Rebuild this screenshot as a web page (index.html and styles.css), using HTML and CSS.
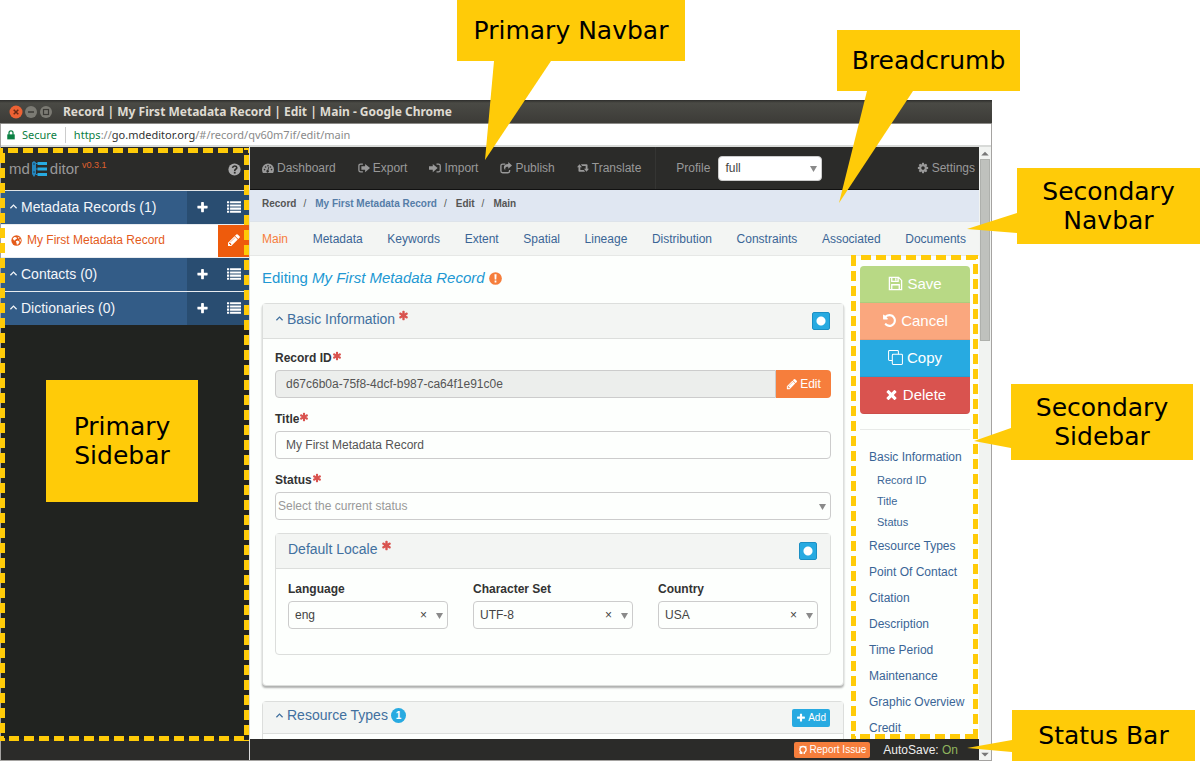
FILE: index.html
```html
<!DOCTYPE html>
<html lang="en">
<head>
<meta charset="utf-8">
<title>mdEditor layout guide</title>
<link rel="stylesheet" href="styles.css">
</head>
<body>
<svg class="sprite" aria-hidden="true">
  <symbol id="plus" viewBox="0 0 1792 1792"><path d="M1600 736v192q0 40-28 68t-68 28h-416v416q0 40-28 68t-68 28h-192q-40 0-68-28t-28-68v-416h-416q-40 0-68-28t-28-68v-192q0-40 28-68t68-28h416v-416q0-40 28-68t68-28h192q40 0 68 28t28 68v416h416q40 0 68 28t28 68z"/></symbol>
  <symbol id="list" viewBox="0 0 16 16"><path d="M0 1.500h2.500v2.300H0zM3.500 1.500H16v2.300H3.500zM0 5.100h2.500v2.300H0zM3.500 5.100H16v2.300H3.500zM0 8.700h2.500V11H0zM3.500 8.700H16V11H3.500zM0 12.300h2.500v2.300H0zM3.500 12.300H16v2.300H3.500z"/></symbol>
  <symbol id="pencil" viewBox="0 0 1792 1792"><path d="M491 1536l91-91-235-235-91 91v107h128v128h107zm523-928q0-22-22-22-10 0-17 7l-542 542q-7 7-7 17 0 22 22 22 10 0 17-7l542-542q7-7 7-17zm-54-192l416 416-832 832h-416v-416zm683 96q0 53-37 90l-166 166-416-416 166-165q36-38 90-38 53 0 91 38l235 234q37 39 37 91z"/></symbol>
  <symbol id="asterisk" viewBox="0 0 1792 1792"><path d="M1546 1050q46 26 59.500 77.500t-12.500 97.500l-64 110q-26 46-77.500 59.500t-97.500-12.500l-266-153v307q0 52-38 90t-90 38h-128q-52 0-90-38t-38-90v-307l-266 153q-46 26-97.500 12.500t-77.500-59.500l-64-110q-26-46-12.500-97.500t59.500-77.500l266-154-266-154q-46-26-59.500-77.500t12.500-97.500l64-110q26-46 77.500-59.500t97.500 12.500l266 153v-307q0-52 38-90t90-38h128q52 0 90 38t38 90v307l266-153q46-26 97.500-12.500t77.500 59.500l64 110q26 46 12.500 97.500t-59.500 77.500l-266 154z"/></symbol>
  <symbol id="undo" viewBox="0 0 1792 1792"><path d="M1664 896q0 156-61 298t-164 245-245 164-298 61q-172 0-327-72.500t-264-204.500q-7-10-6.500-22.500t8.500-20.500l137-138q10-9 25-9 16 2 23 12 73 95 179 147t225 52q104 0 198.500-40.500t163.500-109.500 109.500-163.500 40.500-198.500-40.500-198.500-109.500-163.500-163.500-109.500-198.500-40.500q-98 0-188 35.500t-160 101.500l137 138q31 30 14 69-17 40-59 40h-448q-26 0-45-19t-19-45v-448q0-42 40-59 39-17 69 14l130 129q107-101 244.500-156.500t284.500-55.500q156 0 298 61t245 164 164 245 61 298z"/></symbol>
  <symbol id="times" viewBox="0 0 1792 1792"><path d="M1490 1322q0 40-28 68l-136 136q-28 28-68 28t-68-28l-294-294-294 294q-28 28-68 28t-68-28l-136-136q-28-28-28-68t28-68l294-294-294-294q-28-28-28-68t28-68l136-136q28-28 68-28t68 28l294 294 294-294q28-28 68-28t68 28l136 136q28 28 28 68t-28 68l-294 294 294 294q28 28 28 68z"/></symbol>
  <symbol id="cog" viewBox="0 0 1792 1792"><path d="M1152 896q0-106-75-181t-181-75-181 75-75 181 75 181 181 75 181-75 75-181zm512-109v222q0 12-8 23t-20 13l-185 28q-19 54-39 91 35 50 107 138 10 12 10 25t-9 23q-27 37-99 108t-94 71q-12 0-26-9l-138-108q-44 23-91 38-16 136-29 186-7 28-36 28h-222q-14 0-24.500-8.500t-11.500-21.500l-28-184q-49-16-90-37l-141 107q-10 9-25 9-14 0-25-11-126-114-165-168-7-10-7-23 0-12 8-23 15-21 51-66.500t54-70.500q-27-50-41-99l-183-27q-13-2-21-12.500t-8-23.500v-222q0-12 8-23t19-13l186-28q14-46 39-92-40-57-107-138-10-12-10-24 0-10 9-23 26-36 98.500-107.500t94.500-71.500q13 0 26 10l138 107q44-23 91-38 16-136 29-186 7-28 36-28h222q14 0 24.500 8.500t11.500 21.500l28 184q49 16 90 37l142-107q9-9 24-9 13 0 25 10 129 119 165 170 7 8 7 22 0 12-8 23-15 21-51 66.500t-54 70.500q26 50 41 98l183 28q13 2 21 12.500t8 23.500z"/></symbol>
  <symbol id="up" viewBox="0 0 16 16"><path d="M2.500 11 8 5.500l5.500 5.500" fill="none" stroke="currentColor" stroke-width="2.200"/></symbol>
  <symbol id="dash" viewBox="0 0 16 16"><path fill-rule="evenodd" d="M8 2a8 8 0 0 1 8 8q0 2.500-1.200 4.500H1.200Q0 12.500 0 10a8 8 0 0 1 8-8zM3.400 9a1.100 1.100 0 1 0 0 2.200 1.100 1.100 0 0 0 0-2.200zM4.800 5.600a1.100 1.100 0 1 0 0 2.200 1.100 1.100 0 0 0 0-2.200zM8 4a1.100 1.100 0 1 0 0 2.200A1.100 1.100 0 0 0 8 4zm3.300 1.600a1.100 1.100 0 1 0 0 2.200 1.100 1.100 0 0 0 0-2.200zM12.700 9a1.100 1.100 0 1 0 0 2.200 1.100 1.100 0 0 0 0-2.200zM8.500 6.800 7.300 10.600a1.700 1.700 0 1 0 1.200.3l1-3.800z"/></symbol>
  <symbol id="export" viewBox="0 0 16 16"><path d="M6.500 2.800H3.600Q1.200 2.800 1.200 5v6q0 2.200 2.400 2.200h2.900" fill="none" stroke="currentColor" stroke-width="1.700"/><path d="M4.500 5.800h5V2.500L16 8l-6.500 5.500v-3.300h-5z"/></symbol>
  <symbol id="import" viewBox="0 0 16 16"><path d="M10 2.800h2.600Q15 2.800 15 5v6q0 2.200-2.400 2.200H10" fill="none" stroke="currentColor" stroke-width="1.700"/><path d="M0 5.800h5V2.500L11.500 8 5 13.500v-3.300H0z"/></symbol>
  <symbol id="share" viewBox="0 0 16 16"><path d="M7 2.800H3.500q-2.300 0-2.300 2.200v7q0 2.300 2.300 2.300h7q2.300 0 2.300-2.300v-1.500" fill="none" stroke="currentColor" stroke-width="1.800"/><path d="M11 0l5 4.500-5 4.500V6.500C8 6.400 6.500 7.200 7 11 3.500 7.500 5 2.600 11 2.500z"/></symbol>
  <symbol id="retweet" viewBox="0 0 18 16"><path d="M3.700 2.500 7.500 7H5v4h5.200l2 2.500H3.500q-1.300 0-1.300-1.300V7H0zM5.800 2.500h8.700q1.300 0 1.300 1.300V9H18l-3.700 4.500L10.500 9H13V5H7.800z"/></symbol>
  <symbol id="help" viewBox="0 0 16 16"><circle cx="8" cy="8" r="7.500"/><path d="M5.600 6Q6 3.700 8.200 3.700c3.300 0 3.200 3.100 1.200 4Q8.300 8.300 8.300 9.700" fill="none" stroke="#2b2b29" stroke-width="2"/><path d="M7.200 10.800h2.200V13H7.200z" fill="#2b2b29"/></symbol>
  <symbol id="globe" viewBox="0 0 16 16"><circle cx="8" cy="8" r="7.500"/><path fill="#fff" d="M2.500 5 5 3l2.500.4L9 5 7 6 5.500 8 4 7.500zM9.500 2.500l3 1.500-1.500 1.500zM7 9l3-1 2.500 2-2 3.500L8.500 14 8 11.500zM12 6.500l2-.5.4 3-1.400.3z"/></symbol>
  <symbol id="alert" viewBox="0 0 16 16"><circle cx="8" cy="8" r="7.800"/><path fill="#fff" d="M6.700 2.900h2.600L9 9.300H7zM6.900 10.500h2.200v2.300H6.900z"/></symbol>
  <symbol id="save" viewBox="0 0 16 16"><path d="M1.500 1.500h9.800l3.200 3.200v9.800h-13zM4 1.500v4.300h6.800V1.500M8.300 2.300v2.500M4 14.500V9.300h8v5.200" fill="none" stroke="currentColor" stroke-width="1.400"/></symbol>
  <symbol id="clone" viewBox="0 0 16 16"><rect x=".6" y=".6" width="10.500" height="10.500" rx="1" fill="none" stroke="currentColor" stroke-width="1.100"/><rect x="4.600" y="4.600" width="10.800" height="10.800" rx="1" fill="#27aae1" stroke="currentColor" stroke-width="1.100"/></symbol>
  <symbol id="lock" viewBox="0 0 16 16"><path d="M2 7h12v8H2z"/><path d="M4.800 8V4.500a3.200 3.200 0 0 1 6.400 0V8" fill="none" stroke="currentColor" stroke-width="2"/></symbol>
  <symbol id="github" viewBox="0 0 16 16"><path d="M6 14.500v-2.600a5 5 0 1 1 4 0v2.600M6 13.200q-2.200.5-3.500-1.500" fill="none" stroke="currentColor" stroke-width="2.200"/><path d="M2.500 1.500 6 2.800 3 6zM13.500 1.500 10 2.800 13 6z"/></symbol>
  <symbol id="down" viewBox="0 0 8 8"><path d="M0 1h8L4 8z"/></symbol>
</svg>

<div class="stage">
  <section class="window">
    <header class="titlebar">
      <svg class="winbtns" viewBox="0 0 46 14">
        <circle cx="8" cy="7" r="6.500" fill="#ee6234"/><path d="M5.700 4.700l4.600 4.600m0-4.600L5.700 9.300" stroke="#6b2a14" stroke-width="1.500"/>
        <circle cx="23" cy="7" r="6" fill="#7c7b74"/><path d="M20 7h6" stroke="#3c3b37" stroke-width="1.500"/>
        <circle cx="38" cy="7" r="6" fill="#7c7b74"/><rect x="35.500" y="4.500" width="5" height="5" fill="none" stroke="#3c3b37" stroke-width="1.200"/>
      </svg>
      <span>Record | My First Metadata Record | Edit | Main - Google Chrome</span>
    </header>
    <div class="address">
      <svg class="icon lock"><use href="#lock"/></svg>
      <span class="secure">Secure</span>
      <span class="url"><span class="secure">https</span>://<b>go.mdeditor.org</b>/#/record/qv60m7if/edit/main</span>
    </div>
    <div class="app">
      <aside class="sidebar">
        <div class="brand">
          <span>md</span>
          <svg class="logo" viewBox="0 0 16 16"><path d="M0 1.500 2 0l2 1.500V13l-2 3-2-3z" fill="#2487bf"/><path d="M1 3h2M1 11h2" stroke="#1b3f58"/><path d="M5.500 2.500H15M5.500 8H15M5.500 13.500H15" stroke="#27aae1" stroke-width="3"/><path d="M4 2.500h2M4 8h2M4 13.500h2" stroke="#2487bf"/></svg>
          <span>ditor</span><span class="version">v0.3.1</span>
          <a class="help" href="#help" aria-label="Help"><svg class="icon"><use href="#help"/></svg></a>
        </div>
        <ul class="groups">
          <li class="group"><a href="#records"><svg class="icon up"><use href="#up"/></svg>Metadata Records (1)</a><button aria-label="Add record"><svg class="icon"><use href="#plus"/></svg></button><button aria-label="List records"><svg class="icon"><use href="#list"/></svg></button></li>
          <li class="record"><a href="#record"><svg class="icon"><use href="#globe"/></svg>My First Metadata Record</a><button aria-label="Edit record"><svg class="icon"><use href="#pencil"/></svg></button></li>
          <li class="group"><a href="#contacts"><svg class="icon up"><use href="#up"/></svg>Contacts (0)</a><button aria-label="Add contact"><svg class="icon"><use href="#plus"/></svg></button><button aria-label="List contacts"><svg class="icon"><use href="#list"/></svg></button></li>
          <li class="group"><a href="#dictionaries"><svg class="icon up"><use href="#up"/></svg>Dictionaries (0)</a><button aria-label="Add dictionary"><svg class="icon"><use href="#plus"/></svg></button><button aria-label="List dictionaries"><svg class="icon"><use href="#list"/></svg></button></li>
        </ul>
        <div class="sidefoot"></div>
      </aside>

      <main class="main">
        <nav class="navbar">
          <a href="#dashboard"><svg class="icon"><use href="#dash"/></svg>Dashboard</a>
          <a href="#export"><svg class="icon"><use href="#export"/></svg>Export</a>
          <a href="#import"><svg class="icon"><use href="#import"/></svg>Import</a>
          <a href="#publish"><svg class="icon"><use href="#share"/></svg>Publish</a>
          <a href="#translate"><svg class="icon"><use href="#retweet"/></svg>Translate</a>
          <div class="profile">
            <label for="profile">Profile</label>
            <div class="picker"><select id="profile"><option>full</option></select><svg class="arrow"><use href="#down"/></svg></div>
          </div>
          <a class="settings" href="#settings"><svg class="icon"><use href="#cog"/></svg>Settings</a>
        </nav>
        <nav class="crumbs" aria-label="Breadcrumb">
          <span>Record</span><i>/</i><a href="#record">My First Metadata Record</a><i>/</i><span>Edit</span><i>/</i><span>Main</span>
        </nav>
        <nav class="tabs">
          <a class="active" href="#main">Main</a><a href="#metadata">Metadata</a><a href="#keywords">Keywords</a><a href="#extent">Extent</a><a href="#spatial">Spatial</a><a href="#lineage">Lineage</a><a href="#distribution">Distribution</a><a href="#constraints">Constraints</a><a href="#associated">Associated</a><a href="#documents">Documents</a>
        </nav>
        <div class="content">
          <div class="form">
            <h1>Editing <em>My First Metadata Record</em> <svg class="icon alert"><use href="#alert"/></svg></h1>
            <section class="panel raised">
              <div class="panelhead"><h2><svg class="icon up"><use href="#up"/></svg>Basic Information <svg class="icon req"><use href="#asterisk"/></svg></h2><button class="toggle" aria-label="Toggle required"></button></div>
              <div class="panelbody">
                <div class="field">
                  <label for="rid">Record ID<svg class="icon req"><use href="#asterisk"/></svg></label>
                  <div class="inputgroup"><input id="rid" type="text" value="d67c6b0a-75f8-4dcf-b987-ca64f1e91c0e" readonly><button class="edit"><svg class="icon"><use href="#pencil"/></svg>Edit</button></div>
                </div>
                <div class="field">
                  <label for="title">Title<svg class="icon req"><use href="#asterisk"/></svg></label>
                  <input id="title" type="text" value="My First Metadata Record">
                </div>
                <div class="field">
                  <label for="status">Status<svg class="icon req"><use href="#asterisk"/></svg></label>
                  <div class="picker status"><select id="status"><option>Select the current status</option></select><svg class="arrow"><use href="#down"/></svg></div>
                </div>
                <section class="panel inner">
                  <div class="panelhead"><h2>Default Locale <svg class="icon req"><use href="#asterisk"/></svg></h2><button class="toggle" aria-label="Toggle locale"></button></div>
                  <div class="panelbody locale">
                    <div class="field"><label for="lang">Language</label><div class="picker"><select id="lang"><option>eng</option></select><button class="clear" aria-label="Clear language">×</button><svg class="arrow"><use href="#down"/></svg></div></div>
                    <div class="field"><label for="charset">Character Set</label><div class="picker"><select id="charset"><option>UTF-8</option></select><button class="clear" aria-label="Clear character set">×</button><svg class="arrow"><use href="#down"/></svg></div></div>
                    <div class="field"><label for="country">Country</label><div class="picker"><select id="country"><option>USA</option></select><button class="clear" aria-label="Clear country">×</button><svg class="arrow"><use href="#down"/></svg></div></div>
                  </div>
                </section>
              </div>
            </section>
            <section class="panel">
              <div class="panelhead short"><h2><svg class="icon up"><use href="#up"/></svg>Resource Types <span class="count">1</span></h2><button class="add"><svg class="icon"><use href="#plus"/></svg>Add</button></div>
              <div class="panelbody"></div>
            </section>
          </div>
          <aside class="actions">
            <div class="btns">
              <button class="save"><svg class="icon"><use href="#save"/></svg>Save</button>
              <button class="cancel"><svg class="icon"><use href="#undo"/></svg>Cancel</button>
              <button class="copy"><svg class="icon"><use href="#clone"/></svg>Copy</button>
              <button class="delete"><svg class="icon"><use href="#times"/></svg>Delete</button>
            </div>
            <nav class="toc">
              <a href="#basic">Basic Information</a>
              <a class="sub" href="#rid">Record ID</a>
              <a class="sub" href="#title">Title</a>
              <a class="sub" href="#status">Status</a>
              <a href="#types">Resource Types</a>
              <a href="#contact">Point Of Contact</a>
              <a href="#citation">Citation</a>
              <a href="#description">Description</a>
              <a href="#period">Time Period</a>
              <a href="#maintenance">Maintenance</a>
              <a href="#graphic">Graphic Overview</a>
              <a href="#credit">Credit</a>
            </nav>
          </aside>
        </div>
        <footer class="statusbar">
          <button class="report"><svg class="icon"><use href="#github"/></svg>Report Issue</button>
          <span>AutoSave: <span class="on">On</span></span>
        </footer>
      </main>
      <div class="scrollbar">
        <svg class="tick" viewBox="0 0 8 8"><path d="M1 6h6L4 3z"/></svg>
        <div class="thumb"></div>
        <svg class="tick" viewBox="0 0 8 8"><path d="M1 3h6L4 6z"/></svg>
      </div>
    </div>
  </section>

  <svg class="outline outline-primary">
    <line x1="0" y1="0" x2="100%" y2="0" stroke-dashoffset="-8"/>
    <svg x="100%" overflow="visible"><line x1="0" y1="0" x2="0" y2="593" stroke-dashoffset="-7"/></svg>
    <svg y="100%" overflow="visible"><line x1="0" y1="0" x2="249" y2="0" stroke-dashoffset="-9"/></svg>
    <line x1="0" y1="0" x2="0" y2="100%" stroke-dashoffset="-5"/>
  </svg>
  <svg class="outline outline-secondary">
    <line x1="0" y1="0" x2="100%" y2="0" stroke-dashoffset="-10"/>
    <svg x="100%" overflow="visible"><line x1="0" y1="0" x2="0" y2="484" stroke-dashoffset="-9"/></svg>
    <svg y="100%" overflow="visible"><line x1="0" y1="0" x2="127" y2="0" stroke-dashoffset="-9"/></svg>
    <line x1="0" y1="0" x2="0" y2="100%" stroke-dashoffset="-1"/>
  </svg>

  <div class="callout c-navbar">Primary Navbar<svg class="tail" viewBox="0 0 66 99"><path d="M9 0h57L0 99z"/></svg></div>
  <div class="callout c-crumb">Breadcrumb<svg class="tail" viewBox="0 0 74 112"><path d="M28 0h46L0 112z"/></svg></div>
  <div class="callout c-secnav">Secondary<br>Navbar<svg class="tail" viewBox="0 0 50 20"><path d="M50 0v20L0 16z"/></svg></div>
  <div class="callout c-secside">Secondary<br>Sidebar<svg class="tail" viewBox="0 0 37 20"><path d="M37 0v20L0 13z"/></svg></div>
  <div class="callout c-status">Status Bar<svg class="tail" viewBox="0 0 45 12"><path d="M45 0v12L0 8z"/></svg></div>
  <div class="callout c-side">Primary<br>Sidebar</div>
</div>
</body>
</html>
```
FILE: styles.css
```css
* { box-sizing: border-box; }
body { margin: 0; background: #fff; color: #444; font: 12px/16px "Liberation Sans", Arial, sans-serif; }
a { color: #3a6596; text-decoration: none; }
button { border: 0; padding: 0; font: inherit; color: #fff; cursor: pointer; }
h1, h2, ul { margin: 0; padding: 0; font-weight: normal; list-style: none; }
.sprite { display: none; }
.icon { width: 12px; height: 12px; fill: currentColor; flex: none; vertical-align: -2px; }

.stage { position: relative; height: 100vh; padding: 100px 208px 0 0; display: flex; overflow: hidden; }
.window { flex: 1; min-width: 0; display: flex; flex-direction: column; border: solid #a5a3a1; border-width: 0 1px 1px; }

.titlebar { display: flex; align-items: center; gap: 9px; height: 24px; padding-left: 8px; margin: 0 -1px; background: linear-gradient(#2d2d2b, #4a4a45 3px, #3c3b37); color: #dfdbd2; font: bold 12px/16px "Noto Sans", sans-serif; border-bottom: 1px solid #8b8a87; }
.winbtns { width: 46px; height: 14px; }
.address { display: flex; align-items: center; height: 23px; padding-left: 5px; background: #fff; border-bottom: 2px solid #d8dad8; color: #8a8a8a; font: 11px/16px "Noto Sans", sans-serif; }
.lock { width: 10px; height: 10px; color: #0b8043; margin-right: 6px; }
.secure { color: #0b8043; }
.url { margin-left: 8px; padding-left: 8px; border-left: 1px solid #ccc; }
.url b { color: #333; font-weight: normal; }

.app { flex: 1; min-height: 0; display: grid; grid-template-columns: 249px 1fr 12px; background: #fdfffd; }
.sidebar { display: flex; flex-direction: column; background: #212320; border-right: 1px solid #dcdcdc; }
.brand { display: flex; align-items: center; height: 44px; padding: 0 8px; background: #2b2b29; border-bottom: 1px solid #dfe3e6; color: #999; font-size: 15px; }
.logo { width: 16px; height: 16px; margin: 0 2px; }
.version { color: #e0612d; font-size: 9px; margin: 0 0 8px 3px; }
.help { margin-left: auto; color: #aaa; }
.help .icon { width: 13px; height: 13px; }
.groups { display: flex; flex-direction: column; flex: 1; }
.groups li { display: flex; height: 34px; border-bottom: 1px solid #e8ecf0; }
.groups .record { height: 33px; }
.groups a { flex: 1; display: flex; align-items: center; gap: 3px; padding: 0 0 2px 8px; color: #f3f6fa; background: #335c87; font-size: 14px; }
.groups button { width: 31px; background: #294d71; }
.groups .icon { width: 13px; height: 13px; vertical-align: -2px; }
.groups button:last-child .icon { width: 14px; height: 14px; }
.groups .up { width: 9px; height: 9px; }
.groups .record a { color: #e45b1a; background: #fff; font-size: 12px; gap: 5px; padding-left: 10px; }
.groups .record a .icon { width: 11px; height: 11px; }
.groups .record button { background: #ee5b0c; }
.groups .group:last-child { border-color: #212320; }
.sidefoot { height: 21px; background: #2b2b29; }

.main { min-width: 0; min-height: 0; display: flex; flex-direction: column; }
.navbar { display: flex; align-items: center; height: 43px; flex: none; padding: 0 4px 0 12px; gap: 22px; background: #2b2b29; border-bottom: 1px solid #111; color: #999; }
.navbar a { color: #999; white-space: nowrap; }
.navbar .icon { margin-right: 3px; }
.profile { display: flex; align-items: center; align-self: stretch; gap: 8px; margin-left: -8px; padding-left: 20px; border-left: 1px solid #353533; }
.settings { margin-left: auto; }
.crumbs { display: flex; align-items: center; flex: none; height: 32px; padding: 0 12px 3px; background: #e0e7f2; border-bottom: 1px solid #dde3ea; color: #555; font-size: 10px; font-weight: bold; }
.crumbs i { margin: 0 9px 0 7px; font-style: normal; font-weight: normal; }
.crumbs a { color: #557da8; }
.tabs { display: flex; align-items: center; justify-content: space-between; flex: none; height: 34px; padding: 0 13px 0 12px; background: #f3f5f3; border-bottom: 1px solid #e6e8e6; }
.tabs .active { color: #f67e3c; }
.content { flex: 1; min-height: 0; overflow: hidden; display: grid; grid-template-columns: 1fr 110px; gap: 16px; padding: 0 9px 0 12px; }

.form h1 { margin: 13px 0 16px; font-size: 15px; line-height: 18px; color: #2198d3; }
.alert { width: 13px; height: 13px; color: #f67e3c; }
.panel { margin-bottom: 15px; border: 1px solid #dcdedc; border-radius: 4px; background: #fdfffd; }
.raised { box-shadow: 0 2px 2px #aeb0ae; }
.panelhead { display: flex; align-items: center; justify-content: space-between; height: 35px; padding: 0 13px 0 12px; background: #f3f5f3; border-bottom: 1px solid #dcdedc; }
.panelhead.short { height: 32px; }
.panel h2 { display: flex; align-items: center; gap: 3px; padding-bottom: 5px; font-size: 14px; color: #41709f; }
.panel h2 .up { width: 9px; height: 9px; }
.req { width: 10px; height: 10px; color: #d9534f; vertical-align: 1px; }
.panel h2 .req { width: 11px; height: 11px; margin-bottom: 7px; }
.toggle { width: 18px; height: 18px; border: 1px solid #1b8fc4; border-radius: 2px; background: radial-gradient(circle, #fff 4px, #27aae1 5px); }
.panelbody { padding: 12px; }
.raised > .panelbody { padding: 11px 12px 30px; }
.field { margin-bottom: 13px; }
.field label { display: block; margin-bottom: 4px; color: #333; font-weight: bold; }
input, select { display: block; width: 100%; height: 28px; padding: 0 10px; border: 1px solid #ccc; border-radius: 4px; background: #fdfffd; color: #555; font: inherit; appearance: none; }
.inputgroup { display: flex; }
.inputgroup input { background: #eceeec; border-radius: 4px 0 0 4px; }
.edit { width: 55px; flex: none; background: #f67e3c; border-radius: 0 4px 4px 0; }
.edit .icon { margin-right: 2px; }
.picker { position: relative; }
.picker select { padding: 0 6px; color: #444; }
.picker.status select { padding: 0 2px; color: #999; }
.arrow { position: absolute; right: 5px; top: 11px; width: 7px; height: 7px; fill: #8a8a8a; pointer-events: none; }
.clear { position: absolute; right: 21px; top: 6px; background: none; color: #444; }
.profile .picker { width: 104px; }
.profile select { height: 25px; background: #fff; }
.profile .arrow { top: 9px; }
.inner { margin: 0; }
.locale { display: grid; grid-template-columns: repeat(3, 1fr); gap: 25px; }
.count { width: 15px; height: 15px; border-radius: 8px; background: #27aae1; color: #fff; font-size: 10px; font-weight: bold; line-height: 15px; text-align: center; }
.add { height: 18px; padding: 0 4px; border-radius: 2px; background: #27aae1; font-size: 10px; }
.add .icon, .report .icon { width: 10px; height: 10px; margin-right: 2px; }

.actions { padding-top: 10px; }
.btns { display: flex; flex-direction: column; border-radius: 4px; overflow: hidden; }
.btns button { height: 37px; font-size: 15px; border-bottom: 1px solid rgba(0, 0, 0, .06); }
.btns .icon { width: 15px; height: 15px; margin-right: 4px; }
.save { background: #b8d985; }
.cancel { background: #faa77e; }
.copy { background: #27aae1; }
.delete { background: #d9534f; }
.toc { display: flex; flex-direction: column; gap: 10px; margin-top: 15px; padding: 19px 0 0 9px; border-top: 1px solid #e8eae8; }
.toc a { white-space: nowrap; }
.toc .sub { padding-left: 8px; font-size: 11px; line-height: 11px; }

.statusbar { display: flex; align-items: center; justify-content: flex-end; gap: 13px; flex: none; height: 21px; padding-right: 21px; background: #2b2b29; color: #eee; }
.report { height: 16px; padding: 0 4px; border-radius: 2px; background: #f67e3c; font-size: 10px; }
.on { color: #8fb45e; }
.scrollbar { display: flex; flex-direction: column; padding: 0 1px; background: #f1f3f1; }
.thumb { height: 182px; background: #bfc1bd; border: 1px solid #aeb0ac; }
.tick { width: 10px; height: 12px; fill: #777; }
.tick:last-child { margin-top: auto; }

.outline { position: absolute; stroke: #ffcb08; stroke-width: 10px; stroke-dasharray: 10 5; pointer-events: none; }
.outline-primary { left: 0; top: 148px; width: 249px; height: calc(100% - 168px); }
.outline-secondary { right: 222px; top: 255px; width: 127px; height: calc(100% - 277px); }
.callout { position: absolute; display: flex; align-items: center; justify-content: center; text-align: center; background: #ffcb08; color: #000; font: 25px/29px "DejaVu Sans", sans-serif; white-space: nowrap; }
.tail { position: absolute; fill: #ffcb08; }
.c-navbar { left: 457px; top: 0; width: 228px; height: 61px; }
.c-navbar .tail { left: 28px; top: 100%; width: 66px; height: 99px; }
.c-crumb { right: 180px; top: 30px; width: 183px; height: 61px; }
.c-crumb .tail { left: 2px; top: 100%; width: 74px; height: 112px; }
.c-secnav { right: 0; top: 168px; width: 183px; height: 76px; }
.c-secnav .tail { right: 100%; top: 45px; width: 50px; height: 20px; }
.c-secside { right: 7px; top: 384px; width: 182px; height: 76px; }
.c-secside .tail { right: 100%; top: 44px; width: 37px; height: 20px; }
.c-status { right: 5px; bottom: 0; width: 183px; height: 51px; }
.c-status .tail { right: 100%; top: 30px; width: 45px; height: 12px; }
.c-side { left: 46px; top: 380px; width: 152px; height: 122px; }
```
